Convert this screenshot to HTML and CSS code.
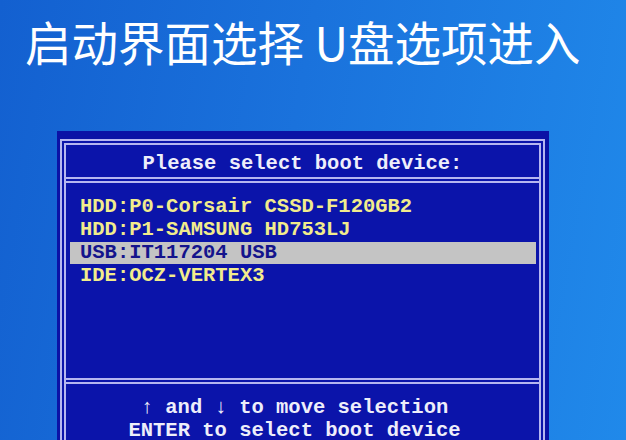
FILE: index.html
```html
<!DOCTYPE html>
<html lang="zh-CN">
<head>
  <meta charset="UTF-8"/>
  <meta name="viewport" content="width=device-width,initial-scale=1"/>
  <title>启动界面选择 U盘选项进入</title>
  <link rel="stylesheet" href="styles.css">
</head>
<body>
  <h1 class="title">启动界面选择 U盘选项进入</h1>

  <div class="bios">
    <div class="frame">
      <div class="head">Please select boot device:</div>
      <ul class="list">
        <li>HDD:P0-Corsair CSSD-F120GB2</li>
        <li>HDD:P1-SAMSUNG HD753LJ</li>
        <li class="sel">USB:IT117204 USB</li>
        <li>IDE:OCZ-VERTEX3</li>
      </ul>
      <div class="foot">
        <div>↑ and ↓ to move selection</div>
        <div>ENTER to select boot device</div>
      </div>
    </div>
  </div>
</body>
</html>
```

FILE: styles.css
```css
:root {
  --bg-left: #1360d0;
  --bg-right: #2089ea;
  --bios: #0b12a6;
  --line: #b6b6f0;
  --yellow: #f2ec8c;
  --sel: #c4c4c4;
  --sel-text: #14148c;
}
* { box-sizing: border-box; margin: 0; padding: 0 }
html, body { height: 100% }
body {
  background: linear-gradient(100deg, var(--bg-left) 0%, #1a72dc 45%, var(--bg-right) 100%);
  overflow: hidden;
}
.title {
  padding: 12px 0 0 25px;
  line-height: 58px;
  font-family: "Noto Sans CJK SC", "Noto Sans", sans-serif;
  font-size: 46.5px;
  font-weight: 400;
  color: #fff;
}
.bios {
  margin: 61px 0 0 57px;
  width: 492px;
  height: 320px;
  background: var(--bios);
  padding: 8px 4px 0 3px;
  font-family: "Liberation Mono", "DejaVu Sans Mono", monospace;
  font-weight: 700;
  font-size: 20.5px;
}
.frame {
  border: 6px double var(--line);
  border-bottom: none;
  height: 100%;
  background: #0b14aa;
}
.head {
  height: 38px;
  line-height: 38px;
  text-align: center;
  color: #eeeefa;
  border-bottom: 6px double var(--line);
}
.list {
  list-style: none;
  height: 195px;
  padding: 13px 3px 0 4px;
  color: var(--yellow);
}
.list li {
  height: 22px;
  line-height: 22px;
  padding-left: 10px;
  white-space: pre;
}
.list li + li { margin-top: 1px }
.list .sel {
  background: var(--sel);
  color: var(--sel-text);
}
.foot {
  border-top: 6px double var(--line);
  padding: 12px 16px 0 0;
  text-align: center;
  line-height: 23px;
  color: #eeeefa;
}
```
